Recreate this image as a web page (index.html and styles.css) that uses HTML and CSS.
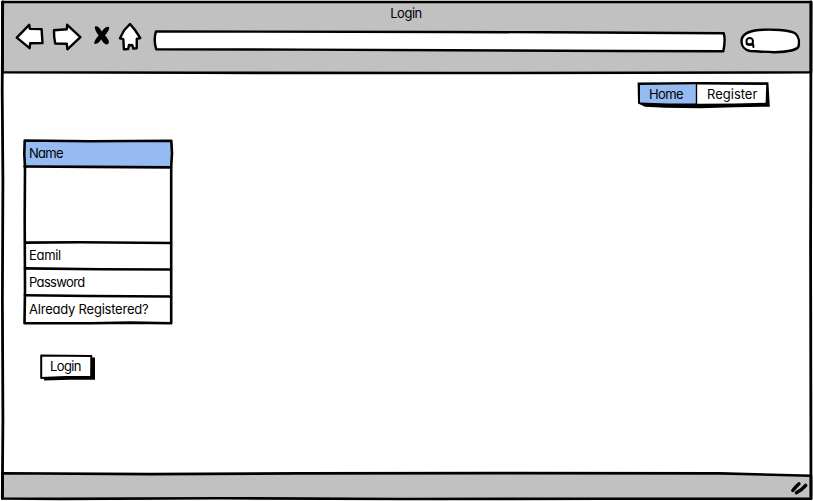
FILE: index.html
```html
<!DOCTYPE html>
<html lang="en">
<head>
<meta charset="utf-8">
<title>Login</title>
<link rel="stylesheet" href="styles.css">
</head>
<body>
<div class="window">
  <header class="chrome">
    <svg class="sketch" viewBox="0 0 813 75"><path class="gray" d="M2.5 2H811V72.3L640 72.8 450 73 200 72.8 2.5 72.2Z"/></svg>
    <div class="title">Login</div>
    <div class="toolbar">
      <svg class="icon back" width="29" height="30" viewBox="15 22 29 30"><path class="ink" d="M16.8 37.6 29.2 24.8 29.9 28.9 41.6 29.1 42.5 43.1 30.2 43.3 29.6 48.2Z"/></svg>
      <svg class="icon forward" width="30" height="30" viewBox="52 22 30 30"><path class="ink" d="M54 30.2 66.8 29.2 67.2 24.8 80.4 37.2 67.4 49.3 66.8 43.8 55.2 43.5 54.2 37Z"/></svg>
      <svg class="icon stop" width="21" height="30" viewBox="91 22 21 30"><path class="solid" d="M94.9 26.4Q98.5 25.4 101.8 31.6 105 26.4 109 26.9Q110.2 29 105 35.3 110.6 41.6 108.2 44 104.6 46 101.2 39.3 98 44.8 94.3 43.8 93.6 41 98.6 35.4 94.2 29.5 94.9 26.4Z"/></svg>
      <svg class="icon home" width="26" height="30" viewBox="117 22 26 30"><path class="ink" d="M130 24 135 30 140.3 38.1 136.8 38.7 136.7 48.2 133.3 48.6 132.4 45.2 129 45 128.2 49 123.9 49.3 123.3 39.2 120 38.3 124 30.5Z"/></svg>
      <svg class="icon address" width="576" height="30" viewBox="152 22 576 30"><path class="ink" d="M156 31.4 450 32 550 32.3 723.7 33.2 Q725.7 40 723.3 51.2L620 51 450 50.3 300 49.6 156.2 49.2Q153.3 40 156 31.4Z"/></svg>
      <svg class="icon search" width="63" height="34" viewBox="739 22 63 34"><path class="ink" d="M741.5 41.5C741.5 35 748 31 759 30 772 29 789 30 795 33.2 798.8 36 799.5 42 798.5 46.5 797 50.2 785 52 774 52.2 764 52 755 51 750 51 744.5 50 741.6 46 741.5 41.5Z"/><circle class="line" cx="749.7" cy="41.2" r="3.3"/><path class="line" d="M746.6 44Q750 45.5 753 44L753.5 47"/></svg>
    </div>
  </header>

  <main class="page">
    <nav class="tabs">
      <svg class="sketch" viewBox="637 81 134 28"><path class="solid" d="M637.6 82.6 700 82 768.4 82.3 769.8 106.7 735 107.3 700 108.3 665 107.8 645 106.7 638 103.6Z"/><path class="blue" d="M640 85 695.8 84.2V103.6L668 103.6 640 102.6Z"/><path class="white" d="M697.2 84.4 766.2 84.9 765.6 102.8 735 103.6 697.2 103.7Z"/></svg>
      <a class="tab tab-home">Home</a>
      <a class="tab tab-register">Register</a>
    </nav>

    <section class="form">
      <svg class="sketch" viewBox="22 138 152 188"><path class="blue" d="M24.5 140.8H171.5V167.2H24.5Z"/><path class="line frame" d="M24.7 140.5 90 141.3 171.3 140.8 172 153 171.2 167V323.2L130 322.6 90 323.2 24.5 323.3 25 290 24.7 220 25 167 24.3 154Z"/><path class="line frame" d="M24.5 166.5 90 166.9 171 167.4M25 242.6 80 242.2 171 243M25 268.4 100 269.2 171 269.5M25 295.3 90 296 171 296.5"/></svg>
      <div class="row name">Name</div>
      <div class="row space"></div>
      <div class="row email">Eamil</div>
      <div class="row password">Password</div>
      <div class="row registered">Already Registered?</div>
    </section>

    <button class="login">
      <svg class="sketch" viewBox="39 353 58 29"><path class="solid" d="M44 357.5H95V379.8L70 379.8 44 380.4Z"/><path class="button-face" d="M41.2 355.5 91.3 356 91.2 376.7 65 377 41.2 378Z"/></svg>
      <span class="login-text">Login</span>
    </button>
  </main>

  <footer class="status">
    <svg class="sketch" viewBox="0 471 813 30"><path class="gray" d="M2.5 473.3 150 474.1 300 473.4 500 473.1 720 473.4 811 475.8V498.7L600 498.8 400 499 220 498.2 60 498.9 2.5 498.5Z"/><path class="grip" d="M792.8 490.5Q796 486.5 799 483.8M796.4 492.7Q802 489.8 805.7 485.3"/></svg>
  </footer>
  <svg class="edges" viewBox="0 0 813 501"><path class="line edge" d="M2.7 2 2.2 90 2.9 180 2.4 300 2.9 420 2.3 498.5M811 2 810.6 250 811 498.7"/></svg>
</div>
</body>
</html>
```
FILE: styles.css
```css
* { box-sizing: border-box; }

body {
  margin: 0;
  background: #fff;
  color: #000;
  font: 13px/18px Inter, "Liberation Sans", sans-serif;
  font-feature-settings: "cv11";
}

.window {
  position: relative;
  display: flex;
  flex-direction: column;
  width: 813px;
  height: 501px;
  overflow: hidden;
}

.chrome, .tabs, .form, .login, .status {
  position: relative;
  isolation: isolate;
}

.sketch {
  position: absolute;
  z-index: -1;
  top: 0;
  left: 0;
  width: 100%;
}

.edges {
  position: absolute;
  inset: 0;
  pointer-events: none;
}

svg path, svg circle { stroke-linejoin: round; stroke-linecap: round; }
.gray { fill: #c1c1c1; stroke: #000; stroke-width: 2.6; }
.ink { fill: #fff; stroke: #000; stroke-width: 2.4; }
.line { fill: none; stroke: #000; stroke-width: 2; }
.frame { stroke-width: 2.6; }
.edge { stroke-width: 2.8; }
.solid { fill: #000; }
.blue { fill: #95bbf2; }
.white { fill: #fff; }
.button-face { fill: #fff; stroke: #000; stroke-width: 2; }
.grip { fill: none; stroke: #000; stroke-width: 3.4; }

.chrome { height: 75px; padding-top: 4px; }
.title { padding-right: 1px; text-align: center; letter-spacing: -0.45px; }
.toolbar { display: flex; align-items: flex-start; padding-left: 15px; }
.icon { display: block; flex: none; overflow: visible; }
.forward { margin-left: 8px; }
.stop { margin-left: 9px; }
.home { margin-left: 5px; }
.address { margin-left: 9px; }
.search { margin-left: 11px; }

.page {
  flex: 1;
  display: flex;
  flex-direction: column;
  align-items: flex-start;
  padding-top: 6px;
}

.tabs {
  display: flex;
  align-self: flex-end;
  width: 134px;
  height: 28px;
  margin-right: 42px;
  padding-top: 4px;
}
.tab-home { width: 59px; padding-left: 12px; letter-spacing: -0.6px; }
.tab-register { padding-left: 11px; }

.form {
  width: 152px;
  height: 188px;
  margin: 29px 0 0 22px;
  padding-top: 2px;
}
.row { height: 27px; padding: 4px 0 0 7px; white-space: nowrap; }
.space { height: 75px; }
.name { letter-spacing: -0.7px; }
.email { letter-spacing: -0.3px; }
.password { letter-spacing: -0.65px; }
.registered { letter-spacing: -0.22px; }

.login {
  display: block;
  width: 58px;
  height: 29px;
  margin: 27px 0 0 39px;
  padding: 4px 0 7px 11px;
  border: 0;
  background: none;
  color: inherit;
  font: inherit;
  font-feature-settings: inherit;
  letter-spacing: -0.6px;
  text-align: left;
}

.status { height: 30px; }
```
